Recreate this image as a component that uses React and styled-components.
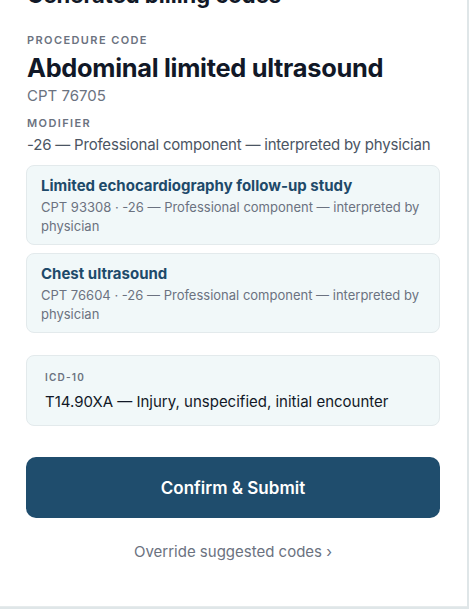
import styled, { createGlobalStyle } from "styled-components";

const GlobalStyle = createGlobalStyle`
    html, body {
        margin: 0;
        padding: 0;
        background: #dfe6e8;
    }
    body {
        font-family: Inter, "Noto Sans", "Liberation Sans", sans-serif;
        -webkit-font-smoothing: antialiased;
    }
`;

const alternatives = [
    {
        name: "Limited echocardiography follow-up study",
        cpt: "93308",
    },
    {
        name: "Chest ultrasound",
        cpt: "76604",
    },
];

const modifier = "-26 — Professional component — interpreted by physician";

export default function App() {
    return (
        <>
        <GlobalStyle />
        <Panel>
            <PageTitle>Generated billing codes</PageTitle>

            <Label $top={25}>Procedure code</Label>
            <ProcedureName>Abdominal limited ultrasound</ProcedureName>
            <Code>CPT 76705</Code>

            <Label $top={10}>Modifier</Label>
            <Modifier>{modifier}</Modifier>

            <CardList>
                {alternatives.map(item => (
                    <AltCard key={item.cpt}>
                        <AltName>{item.name}</AltName>
                        <AltMeta>CPT {item.cpt} · {modifier}</AltMeta>
                    </AltCard>
                ))}
            </CardList>

            <DiagnosisCard>
                <SmallLabel>ICD-10</SmallLabel>
                <Diagnosis>T14.90XA — Injury, unspecified, initial encounter</Diagnosis>
            </DiagnosisCard>

            <SubmitButton>Confirm &amp; Submit</SubmitButton>
            <OverrideLink>Override suggested codes ›</OverrideLink>
        </Panel>
        </>
    );
}

const Panel = styled.div`
    width: 467px;
    height: 607px;
    box-sizing: border-box;
    background: #ffffff;
    overflow: hidden;
    padding: 0 27px 0 26px;
    display: flex;
    flex-direction: column;
    border-bottom: 1px solid #e6ebec;
`;

const PageTitle = styled.h2`
    margin: -18px 0 0 1px;
    font-size: 22px;
    line-height: 26px;
    font-weight: 700;
    color: #111827;
`;

const Label = styled.div`
    margin: ${props => props.$top}px 0 0 1px;
    font-size: 11px;
    line-height: 14px;
    font-weight: 600;
    letter-spacing: 1.4px;
    text-transform: uppercase;
    color: #6b7280;
`;

const ProcedureName = styled.h1`
    margin: 5px 0 0 1px;
    font-size: 25.4px;
    line-height: 32px;
    font-weight: 700;
    letter-spacing: -0.3px;
    color: #111827;
`;

const Code = styled.div`
    margin: 2px 0 0 1px;
    font-size: 15px;
    line-height: 20px;
    color: #6b7280;
`;

const Modifier = styled.div`
    margin: 5px 0 0 1px;
    font-size: 15px;
    line-height: 20px;
    letter-spacing: -0.2px;
    white-space: nowrap;
    color: #4b5563;
`;

const CardList = styled.div`
    margin-top: 10px;
    display: flex;
    flex-direction: column;
    gap: 8px;
`;

const AltCard = styled.div`
    box-sizing: border-box;
    height: 80px;
    padding: 10px 14px 0;
    background: #f1f8f9;
    border: 1px solid #e3eaec;
    border-radius: 8px;
`;

const AltName = styled.div`
    font-size: 15px;
    line-height: 20px;
    font-weight: 700;
    color: #1e4a6a;
`;

const AltMeta = styled.div`
    margin-top: 2px;
    font-size: 13px;
    line-height: 19px;
    color: #6b7280;
`;

const DiagnosisCard = styled.div`
    margin-top: 22px;
    box-sizing: border-box;
    height: 71px;
    padding: 14px 18px 0;
    background: #f1f8f9;
    border: 1px solid #e3eaec;
    border-radius: 8px;
`;

const SmallLabel = styled.div`
    font-size: 10px;
    line-height: 14px;
    font-weight: 600;
    letter-spacing: 1.2px;
    color: #6b7280;
`;

const Diagnosis = styled.div`
    margin-top: 8px;
    font-size: 15px;
    line-height: 20px;
    color: #111827;
`;

const SubmitButton = styled.button`
    margin-top: 31px;
    flex-shrink: 0;
    height: 61px;
    width: 100%;
    border: none;
    border-radius: 10px;
    background: #1f4d6d;
    color: #ffffff;
    font-family: inherit;
    font-size: 17px;
    font-weight: 600;
    cursor: pointer;
`;

const OverrideLink = styled.button`
    margin-top: 24px;
    align-self: center;
    padding: 0;
    border: none;
    background: none;
    font-family: inherit;
    font-size: 15px;
    line-height: 20px;
    color: #6b7280;
    cursor: pointer;
`;
